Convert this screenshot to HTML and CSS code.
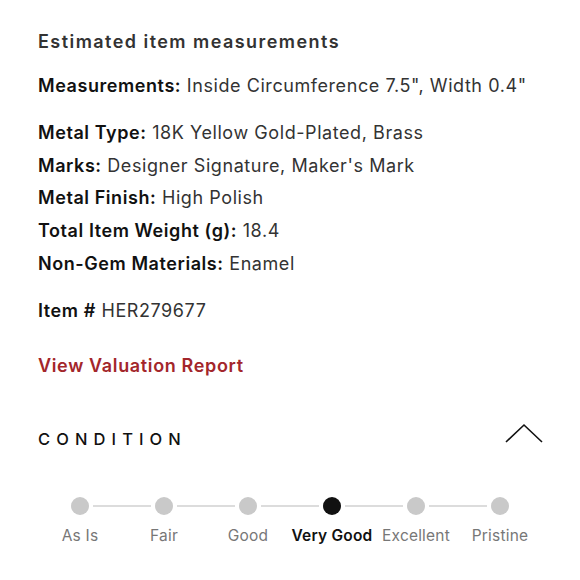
FILE: index.html
```html
<!DOCTYPE html>
<html lang="en">
<head>
<meta charset="utf-8">
<link rel="stylesheet" href="styles.css">
</head>
<body>
<main class="panel">
  <h2 class="title">Estimated item measurements</h2>
  <p class="row first"><b>Measurements:</b> Inside Circumference 7.5", Width 0.4"</p>
  <div class="group">
    <p class="row"><b>Metal Type:</b> 18K Yellow Gold-Plated, Brass</p>
    <p class="row"><b>Marks:</b> Designer Signature, Maker's Mark</p>
    <p class="row"><b>Metal Finish:</b> High Polish</p>
    <p class="row"><b>Total Item Weight (g):</b> 18.4</p>
    <p class="row"><b>Non-Gem Materials:</b> Enamel</p>
  </div>
  <p class="row item"><b>Item #</b> HER279677</p>
  <a class="report" href="#">View Valuation Report</a>
  <div class="cond-head">
    <span class="cond-title">CONDITION</span>
    <svg class="chev" width="40" height="22" viewBox="0 0 40 22"><polyline points="2,20 20,3 38,20" fill="none" stroke="#111" stroke-width="1.6"/></svg>
  </div>
  <div class="stepper">
    <div class="track">
      <span class="dot"></span><span class="line"></span>
      <span class="dot"></span><span class="line"></span>
      <span class="dot"></span><span class="line"></span>
      <span class="dot on"></span><span class="line"></span>
      <span class="dot"></span><span class="line"></span>
      <span class="dot"></span>
    </div>
    <div class="labels">
      <span>As Is</span><span>Fair</span><span>Good</span><span class="on">Very Good</span><span>Excellent</span><span>Pristine</span>
    </div>
  </div>
</main>
</body>
</html>
```
FILE: styles.css
```css
* { box-sizing: border-box; }
html, body { margin: 0; padding: 0; background: #fff; }
body { font-family: Inter, "Noto Sans", sans-serif; color: #222; }
.panel { padding: 30px 0 0 38px; width: 580px; }
.title { margin: 0; font-size: 18px; font-weight: 600; color: #333; line-height: 24px; letter-spacing: 1.45px; }
.row { margin: 0; font-size: 18px; line-height: 32.75px; color: #333; letter-spacing: 0.57px; }
.row b { font-weight: 600; color: #111; }
.first { margin-top: 16px; }
.group { margin-top: 14px; }
.item { margin-top: 14px; }
.report { display: block; margin-top: 27px; font-size: 18px; font-weight: 600; color: #a3262b; text-decoration: none; line-height: 24px; letter-spacing: 0.65px; }
.cond-head { display: flex; justify-content: space-between; align-items: center; margin-top: 49px; padding-right: 36px; height: 24px; }
.cond-title { font-size: 16.5px; font-weight: 500; letter-spacing: 6.1px; color: #111; }
.chev { margin-top: -12px; }
.stepper { margin-top: 46px; width: 504px; }
.track { display: flex; align-items: center; padding: 0 33px; }
.dot { width: 18px; height: 18px; border-radius: 50%; background: #c9c9c9; flex: none; }
.dot.on { background: #111; }
.line { flex: 1; height: 2px; background: #dcdcdc; margin: 0 4px; }
.labels { display: grid; grid-template-columns: repeat(6, 84px); margin-top: 11px; }
.labels span { text-align: center; font-size: 15.5px; color: #777; white-space: nowrap; letter-spacing: 0.2px; }
.labels span.on { color: #111; font-weight: 600; }
```
